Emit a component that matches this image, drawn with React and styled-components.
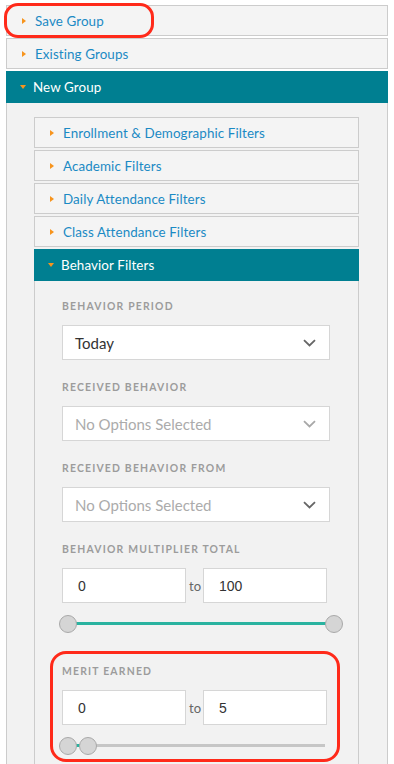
import React from "react";
import styled, { createGlobalStyle } from "styled-components";

const GlobalStyle = createGlobalStyle`
  body {
    margin: 0;
    background: #ffffff;
    font-family: "Lato", "Noto Sans", sans-serif;
  }
`;

const Page = styled.div`
  position: relative;
  width: 394px;
  height: 764px;
  overflow: hidden;
  box-sizing: border-box;
  padding: 5px 6px 0 6px;
`;

const Row = styled.div`
  display: flex;
  align-items: center;
  gap: 9px;
  height: ${(p) => (p.open ? "32px" : "31px")};
  box-sizing: border-box;
  padding-left: 14px;
  margin-bottom: ${(p) => (p.open ? "0" : "2px")};
  background: ${(p) => (p.open ? "#007f91" : "#f4f4f4")};
  border: ${(p) => (p.open ? "none" : "1px solid #cccccc")};
  color: ${(p) => (p.open ? "#ffffff" : "#1b8ac4")};
  font-size: 13.4px;
  letter-spacing: 0.1px;
`;

const Caret = styled.span`
  display: inline-block;
  width: 0;
  height: 0;
  ${(p) =>
    p.open
      ? `border-left: 3.5px solid transparent;
         border-right: 3.5px solid transparent;
         border-top: 4px solid #f7941d;
         margin-right: -2px;`
      : `border-top: 3.5px solid transparent;
         border-bottom: 3.5px solid transparent;
         border-left: 4px solid #f7941d;
         margin-left: 1px;`}
`;

const Panel = styled.div`
  background: #f2f2f2;
  border-left: 1px solid #cccccc;
  border-right: 1px solid #cccccc;
  padding: ${(p) => p.pad};
  min-height: 800px;
`;

const Field = styled.div`
  display: flex;
  flex-direction: column;
  margin-bottom: ${(p) => p.gap || "20px"};
`;

const Label = styled.div`
  height: 14px;
  line-height: 14px;
  font-size: 10.4px;
  font-weight: 700;
  letter-spacing: 1.2px;
  color: #9c9c9c;
  text-transform: uppercase;
  margin-bottom: 12px;
`;

const Select = styled.div`
  display: flex;
  align-items: center;
  justify-content: space-between;
  height: 35px;
  width: 268px;
  box-sizing: border-box;
  background: #ffffff;
  border: 1px solid #d6d6d6;
  padding: 0 13px 0 12px;
  font-size: 15px;
  color: ${(p) => (p.empty ? "#ababab" : "#333333")};
`;

const RangeRow = styled.div`
  display: flex;
  align-items: center;
  gap: 3px;
`;

const NumBox = styled.div`
  width: 124px;
  height: 35px;
  box-sizing: border-box;
  background: #ffffff;
  border: 1px solid #d6d6d6;
  padding-left: 15px;
  display: flex;
  align-items: center;
  font-family: "Liberation Sans", Arial, sans-serif;
  font-size: 14px;
  color: #333333;
`;

const To = styled.span`
  font-size: 13px;
  color: #666666;
  width: 11px;
  text-align: center;
`;

const Slider = styled.div`
  position: relative;
  width: 284px;
  height: 18px;
  margin: 12px 0 0 -3px;
`;

const Track = styled.div`
  position: absolute;
  top: 7px;
  height: 3px;
  background: ${(p) => (p.fill ? "#2ab3a0" : "#c6c6c6")};
`;

const Knob = styled.div`
  position: absolute;
  top: 0;
  width: 18px;
  height: 18px;
  box-sizing: border-box;
  border-radius: 50%;
  background: #d5d5d5;
  border: 1px solid #a9a9a9;
`;

const Mark = styled.div`
  position: absolute;
  border: 3px solid #ff2a1a;
  box-sizing: border-box;
  border-radius: ${(p) => p.r}px;
  pointer-events: none;
`;

const Chevron = ({ light }) => (
  <svg width="13" height="8" viewBox="0 0 13 8">
    <path
      d="M1 1.2 L6.5 6.5 L12 1.2"
      fill="none"
      stroke={light ? "#a8a8a8" : "#666666"}
      strokeWidth="1.8"
    />
  </svg>
);

const RangeSlider = ({ from, to, max, gray }) => {
  const span = 266;
  const a = (from / max) * span;
  const b = (to / max) * span;
  return (
    <Slider>
      {gray && <Track style={{ left: 9, width: 257 }} />}
      <Track fill="true" style={{ left: 9 + a, width: b - a }} />
      <Knob style={{ left: a }} />
      <Knob style={{ left: gray ? 20 : b }} />
    </Slider>
  );
};

const Item = ({ label, open }) => (
  <Row open={open}>
    <Caret open={open} />
    {label}
  </Row>
);

export default function App() {
  return (
    <>
      <GlobalStyle />
      <Page>
        <Item label="Save Group" />
        <Item label="Existing Groups" />
        <Item label="New Group" open />
        <Panel pad="14px 28px 0 27px">
          <Item label="Enrollment & Demographic Filters" />
          <Item label="Academic Filters" />
          <Item label="Daily Attendance Filters" />
          <Item label="Class Attendance Filters" />
          <Item label="Behavior Filters" open />
          <Panel pad="18px 27px 0 27px">
            <Field>
              <Label>Behavior Period</Label>
              <Select>
                Today
                <Chevron />
              </Select>
            </Field>
            <Field>
              <Label>Received Behavior</Label>
              <Select empty>
                No Options Selected
                <Chevron light />
              </Select>
            </Field>
            <Field>
              <Label>Received Behavior From</Label>
              <Select empty>
                No Options Selected
                <Chevron />
              </Select>
            </Field>
            <Field gap="31px">
              <Label>Behavior Multiplier Total</Label>
              <RangeRow>
                <NumBox>0</NumBox>
                <To>to</To>
                <NumBox>100</NumBox>
              </RangeRow>
              <RangeSlider from={0} to={100} max={100} />
            </Field>
            <Field>
              <Label>Merit Earned</Label>
              <RangeRow>
                <NumBox>0</NumBox>
                <To>to</To>
                <NumBox>5</NumBox>
              </RangeRow>
              <RangeSlider from={0} to={5} max={100} gray />
            </Field>
          </Panel>
        </Panel>
        <Mark r={14} style={{ left: 4, top: 3, width: 150, height: 35 }} />
        <Mark r={16} style={{ left: 50, top: 651, width: 290, height: 111 }} />
      </Page>
    </>
  );
}
